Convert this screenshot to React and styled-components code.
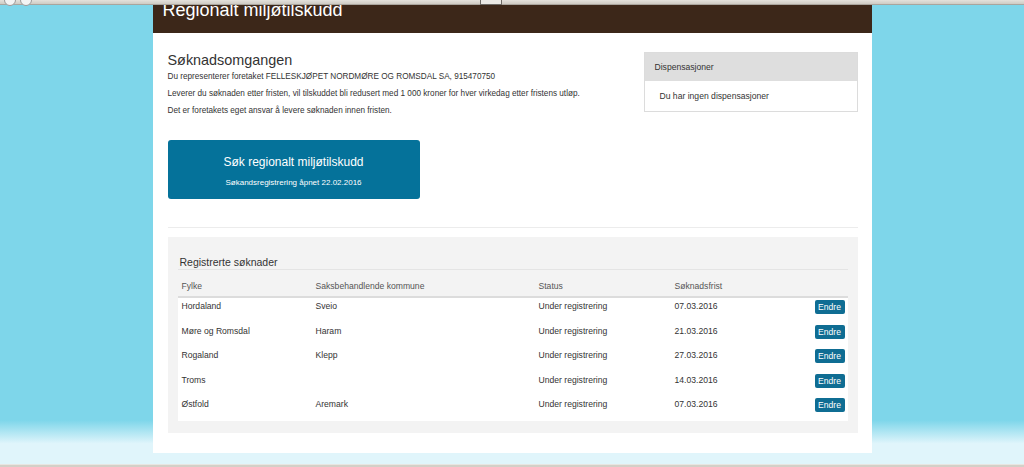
import React from "react";
import styled, { createGlobalStyle } from "styled-components";

const GlobalStyle = createGlobalStyle`
  html, body {
    margin: 0;
    padding: 0;
  }
  body {
    font-family: "Liberation Sans", Arial, sans-serif;
    color: #333;
  }
`;

const Page = styled.div`
  min-height: 467px;
  display: flex;
  flex-direction: column;
  align-items: center;
  background: linear-gradient(
    to bottom,
    #7ed6ea 0%,
    #7ed6ea 90%,
    #e0f5fb 95%,
    #e0f5fb 100%
  );
`;

// browser toolbar lying over the scrolled page
const Chrome = styled.div`
  position: fixed;
  left: 0;
  right: 0;
  top: 0;
  height: 5px;
  background: linear-gradient(to bottom, #e4e1dc, #cfcbc4);
  border-bottom: 1px solid #a9a59e;
  box-sizing: border-box;
  z-index: 5;
`;

const ChromeDot = styled.div`
  position: absolute;
  left: ${(p) => p.left}px;
  top: -6px;
  width: 10px;
  height: 10px;
  border-radius: 50%;
  background: #f4f4f4;
  border: 1px solid #9a9a9a;
`;

const ChromeThumb = styled.div`
  position: absolute;
  left: 480px;
  top: -1px;
  width: 22px;
  height: 6px;
  background: #ebe9e5;
  border: 1px solid #6d6a66;
  box-sizing: border-box;
`;

const BottomBar = styled.div`
  position: fixed;
  left: 0;
  right: 0;
  bottom: 0;
  height: 2px;
  background: #d4d0c8;
  border-top: 1px solid #e8e6e2;
`;

const Container = styled.div`
  width: 719px;
  background: #fff;
  padding-bottom: 20px;
`;

const Header = styled.div`
  height: 33px;
  background: #3c2719;
  padding: 1px 0 0 10px;
  box-sizing: border-box;
  color: #fff;
  font-size: 18px;
  line-height: 18px;
`;

const Content = styled.div`
  padding: 19px 14px 0 15px;
`;

const TopRow = styled.div`
  display: flex;
  align-items: flex-start;
  gap: 20px;
`;

const Intro = styled.div`
  flex: 1;
`;

const Title = styled.h2`
  margin: 0 0 3px;
  font-size: 14.4px;
  line-height: 16px;
  font-weight: normal;
  color: #333;
`;

const Text = styled.p`
  margin: 0 0 5px;
  font-size: 8.2px;
  line-height: 12px;
  color: #333;
`;

const ApplyButton = styled.button`
  margin-top: 23px;
  width: 252px;
  height: 59px;
  border: none;
  border-radius: 3px;
  background: #05729a;
  color: #fff;
  font-family: "Liberation Sans", Arial, sans-serif;
  display: flex;
  flex-direction: column;
  align-items: center;
  padding: 14px 0 0;
  box-sizing: border-box;
`;

const ApplyTitle = styled.span`
  font-size: 12px;
  line-height: 16px;
`;

const ApplySub = styled.span`
  font-size: 8px;
  line-height: 10px;
  margin-top: 8px;
`;

const SidePanel = styled.div`
  width: 214px;
  border: 1px solid #dcdcdc;
  box-sizing: border-box;
`;

const SideHead = styled.div`
  height: 28px;
  background: #dedede;
  font-size: 8.6px;
  line-height: 28px;
  padding-left: 10px;
  color: #333;
`;

const SideBody = styled.div`
  height: 30px;
  font-size: 8.6px;
  line-height: 30px;
  padding-left: 15px;
  color: #333;
`;

const Divider = styled.hr`
  margin: 28px 0 0;
  border: none;
  border-top: 1px solid #ececec;
`;

const RegPanel = styled.div`
  margin-top: 9px;
  background: #f3f3f3;
  padding: 18px 10px 12.5px;
`;

const RegTitle = styled.div`
  font-size: 10.5px;
  line-height: 14px;
  color: #333;
  border-bottom: 1px solid #e4e4e4;
  padding-left: 2px;
`;

const Row = styled.div`
  display: grid;
  grid-template-columns: 134px 223px 136px 140px 1fr;
  height: ${(p) => (p.head ? "28px" : "24.5px")};
  box-sizing: border-box;
  background: ${(p) => (p.head ? "transparent" : "#fff")};
  border-bottom: ${(p) => (p.head ? "2px solid #dcdcdc" : "none")};
`;

const Cell = styled.div`
  padding: ${(p) => (p.head ? "11px 4px 0" : "3px 4px 0")};
  font-size: 8.6px;
  line-height: 10px;
  color: ${(p) => (p.head ? "#555" : "#333")};
  display: flex;
  align-items: flex-start;
`;

const ActionCell = styled.div`
  display: flex;
  justify-content: flex-end;
  padding: 2px 3px 0 0;
`;

const SmallButton = styled.button`
  width: 30px;
  height: 14px;
  border: none;
  border-radius: 2px;
  background: #0f6d93;
  color: #fff;
  font-family: "Liberation Sans", Arial, sans-serif;
  font-size: 8.6px;
  line-height: 14px;
  padding: 0;
`;

const rows = [
  { fylke: "Hordaland", kommune: "Sveio", frist: "07.03.2016" },
  { fylke: "Møre og Romsdal", kommune: "Haram", frist: "21.03.2016" },
  { fylke: "Rogaland", kommune: "Klepp", frist: "27.03.2016" },
  { fylke: "Troms", kommune: "", frist: "14.03.2016" },
  { fylke: "Østfold", kommune: "Aremark", frist: "07.03.2016" },
];

export default function App() {
  return (
    <Page>
      <GlobalStyle />
      <Chrome>
        <ChromeDot left={4} />
        <ChromeDot left={20} />
        <ChromeThumb />
      </Chrome>
      <Container>
        <Header>Regionalt miljøtilskudd</Header>
        <Content>
          <TopRow>
            <Intro>
              <Title>Søknadsomgangen</Title>
              <Text>
                Du representerer foretaket FELLESKJØPET NORDMØRE OG ROMSDAL SA,
                915470750
              </Text>
              <Text>
                Leverer du søknaden etter fristen, vil tilskuddet bli redusert
                med 1 000 kroner for hver virkedag etter fristens utløp.
              </Text>
              <Text>Det er foretakets eget ansvar å levere søknaden innen fristen.</Text>
              <ApplyButton>
                <ApplyTitle>Søk regionalt miljøtilskudd</ApplyTitle>
                <ApplySub>Søkandsregistrering åpnet 22.02.2016</ApplySub>
              </ApplyButton>
            </Intro>
            <SidePanel>
              <SideHead>Dispensasjoner</SideHead>
              <SideBody>Du har ingen dispensasjoner</SideBody>
            </SidePanel>
          </TopRow>

          <Divider />

          <RegPanel>
            <RegTitle>Registrerte søknader</RegTitle>
            <Row head>
              <Cell head>Fylke</Cell>
              <Cell head>Saksbehandlende kommune</Cell>
              <Cell head>Status</Cell>
              <Cell head>Søknadsfrist</Cell>
              <Cell head />
            </Row>
            {rows.map((r) => (
              <Row key={r.fylke}>
                <Cell>{r.fylke}</Cell>
                <Cell>{r.kommune}</Cell>
                <Cell>Under registrering</Cell>
                <Cell>{r.frist}</Cell>
                <ActionCell>
                  <SmallButton>Endre</SmallButton>
                </ActionCell>
              </Row>
            ))}
          </RegPanel>
        </Content>
      </Container>
      <BottomBar />
    </Page>
  );
}
